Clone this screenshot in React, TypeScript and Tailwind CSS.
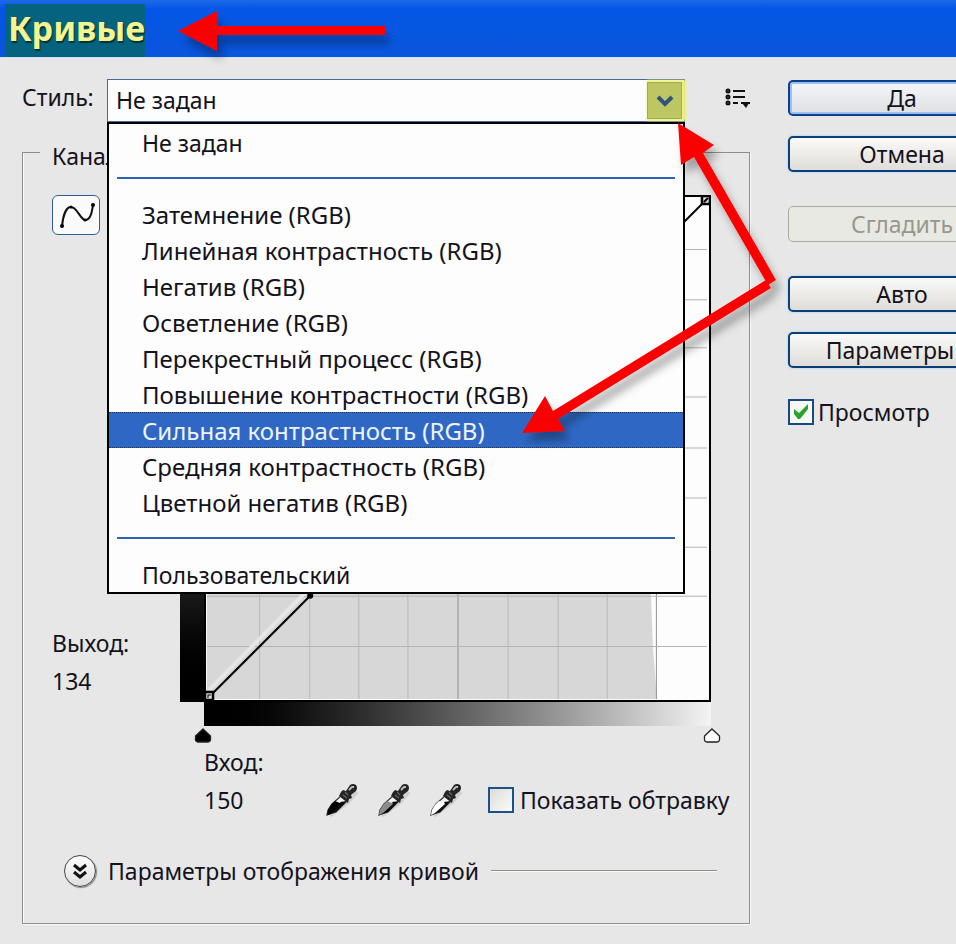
import { useState } from 'react';

const presets = [
  'Затемнение (RGB)',
  'Линейная контрастность (RGB)',
  'Негатив (RGB)',
  'Осветление (RGB)',
  'Перекрестный процесс (RGB)',
  'Повышение контрастности (RGB)',
  'Сильная контрастность (RGB)',
  'Средняя контрастность (RGB)',
  'Цветной негатив (RGB)',
];

const gridX = [55, 105, 154, 203, 253, 303, 353, 402, 451];
const gridY = [54, 104, 152, 201, 252, 302, 351, 400, 450];

const buttonBase =
  'h-9 w-[228px] rounded-[5px] border-2 text-center leading-8 whitespace-nowrap';
const buttonNormal =
  'border-[#0a4079] bg-linear-to-b from-[#fafaf9] to-[#dfddd8] shadow-[0_0_2px_1px_#c5dcef]';

function PresetOption({ name, selected }: { name: string; selected?: boolean }) {
  return (
    <li
      role="option"
      aria-selected={selected ? true : false}
      className={
        selected
          ? 'h-9 border-y border-dotted border-[#15386f] bg-[#2f68c4] pl-[33px] leading-9 text-[#eef4ff]'
          : 'h-9 pl-[33px] leading-[38px]'
      }
    >
      {name}
    </li>
  );
}

function PresetList() {
  return (
    <div
      role="listbox"
      aria-label="Стиль"
      className="absolute top-full left-0 z-10 w-full border-2 border-black bg-[#fdfdfd]"
    >
      <ul>
        <PresetOption name="Не задан" />
      </ul>
      <hr className="mx-2 my-[17px] border-t-2 border-[#2e62b8]" />
      <ul className="text-2xl">
        {presets.map((name) => (
          <PresetOption key={name} name={name} selected={name.startsWith('Сильная')} />
        ))}
      </ul>
      <hr className="mx-2 my-[17px] border-t-2 border-[#2e62b8]" />
      <ul>
        <PresetOption name="Пользовательский" />
      </ul>
    </div>
  );
}

function CurveGraph() {
  return (
    <svg viewBox="0 0 506 506" className="block w-full" aria-hidden="true">
      <rect width="506" height="506" fill="#fdfdfd" />
      <path d="M3 200H440L446 396L448 450L452 503H3Z" fill="#d6d7d6" />
      {gridX.map((x) => (
        <path key={x} d={`M${x}.5 3V503`} stroke={x === 253 || x === 451 ? '#8f9190' : '#b7b9b8'} />
      ))}
      {gridY.map((y) => (
        <path key={y} d={`M3 ${y}.5H502`} stroke="#b4b4b4" />
      ))}
      <path d="M5 494L102 396" stroke="#e6e6e6" strokeWidth="4" />
      <path d="M5 501L501 5" stroke="#000" strokeWidth="2" />
      <circle cx="106" cy="400" r="3" />
      <rect x="1" y="1" width="504" height="504" fill="none" stroke="#000" strokeWidth="2" />
      <rect x="1" y="496" width="8" height="8" fill="#ddd" stroke="#000" strokeWidth="2.5" />
      <path d="M4 502V499H7" fill="none" stroke="#000" />
      <rect x="497" y="1" width="8" height="8" fill="#ddd" stroke="#000" strokeWidth="2.5" />
      <path d="M499 7L503 3" stroke="#000" strokeWidth="2" />
    </svg>
  );
}

function RangeMarker({ fill }: { fill: string }) {
  return (
    <svg width="18" height="15" viewBox="0 0 18 15" aria-hidden="true">
      <path
        d="M9 1L16.500 8V12Q16 14 14 14H4Q2 14 1.500 12V8Z"
        fill={fill}
        stroke="#222"
        strokeWidth="1.300"
      />
    </svg>
  );
}

function Eyedropper({ label, fill }: { label: string; fill: string }) {
  return (
    <button type="button" aria-label={label} className="h-[34px] w-8 shrink-0">
      <svg width="32" height="34" viewBox="0 0 32 34" aria-hidden="true">
        <path d="M4 33L22 20L31 9" fill="none" stroke="#cfcfcf" strokeWidth="3" />
        <path
          d="M16 12L21 18L10 29L4 31L1 32L2 27L6 21Z"
          fill="#f3f3f3"
          stroke="#333"
          strokeWidth="1.200"
        />
        <path d="M9 18L14 20L17 20L9 28L4 31L1 32L2 27L5 22Z" fill={fill} />
        <path d="M1 32L10 29L21 18L14 19L15 21L5 30Z" fill="#0c0c0c" />
        <path
          d="M15 9L17 7L20 8L24 2Q27 0 30 2Q32 5 30 8L25 12L26 15L23 16L22 20L18 17L13 13Z"
          fill="#242424"
        />
        <path d="M23 7L26 4L28 4" fill="none" stroke="#bbb" strokeWidth="1.800" />
        <path d="M17 12L21 15M19 9L22 12" stroke="#666" strokeWidth="1.200" />
      </svg>
    </button>
  );
}

function PointerArrows() {
  return (
    <svg
      width="800"
      height="460"
      viewBox="0 0 800 460"
      className="pointer-events-none absolute top-0 left-0 z-20"
      aria-hidden="true"
    >
      <defs>
        <filter id="arrow-shadow" x="-10%" y="-30%" width="120%" height="180%">
          <feDropShadow dx="5" dy="9" stdDeviation="4" floodColor="#000" floodOpacity="0.3" />
        </filter>
      </defs>
      <g fill="#fb0505" filter="url(#arrow-shadow)">
        <path d="M178 31L217 11V26H385V35H217V51Z" />
        <path d="M678 123L714 145L703 153L776 280L768 285L694 157L681 165Z" />
        <path d="M522 433L545 396L553 411L766 280L771 288L558 419L565 431Z" />
      </g>
    </svg>
  );
}

export default function App() {
  const [preview, setPreview] = useState(true);
  const [clipping, setClipping] = useState(false);

  return (
    <div className="relative min-h-[944px] overflow-hidden bg-[#e7e7e7] font-['Noto_Sans','Open_Sans',sans-serif] text-[23px] text-[#14121c]">
      <header className="flex h-[58px] border-b border-[#cfe3f7] bg-linear-to-b from-[#1c6ae8] via-[#0456e6] via-15% to-[#0a55dc] pt-1 pl-[5px]">
        <h1 className="w-[140px] bg-[#06637f] pl-[3px] text-[34px] leading-[48px] font-bold text-[#f4f490] [text-shadow:1px_2px_1px_#033]">
          Кривые
        </h1>
      </header>

      <main className="flex gap-[38px] pt-[21px] pl-[22px]">
        <section className="min-w-0 flex-1">
          <div className="flex h-[43px]">
            <label htmlFor="style" className="w-[85px] leading-9">
              Стиль:
            </label>
            <div className="relative h-full flex-1">
              <select
                id="style"
                className="h-full w-full appearance-none border border-[#4a6a9a] bg-[#fdfdfd] pl-2"
              >
                <option>Не задан</option>
                {presets.map((name) => (
                  <option key={name}>{name}</option>
                ))}
                <option>Пользовательский</option>
              </select>
              <span className="pointer-events-none absolute inset-y-[3px] right-[3px] flex w-[35px] items-center justify-center border border-[#a3ad55] bg-[#bcc763] shadow-[2px_0_2px_2px_#eef07a]">
                <svg width="18" height="14" viewBox="0 0 18 14" aria-hidden="true">
                  <path d="M2 3L9 10L16 3" fill="none" stroke="#31527f" strokeWidth="4" />
                </svg>
              </span>
              <PresetList />
            </div>
            <button type="button" aria-label="Параметры стиля" className="ml-10 h-[37px]">
              <svg width="25" height="22" viewBox="0 0 25 22" aria-hidden="true">
                <path d="M8 4H20M8 10H20M8 16H13M16 16H25" stroke="#111" strokeWidth="2" />
                <path d="M17 16H24L21 21Z" fill="#111" />
                <g fill="#999" stroke="#111" strokeWidth="2">
                  <circle cx="3" cy="4" r="1.500" />
                  <circle cx="3" cy="10" r="1.500" />
                  <circle cx="3" cy="16" r="1.500" />
                </g>
              </svg>
            </button>
          </div>

          <fieldset className="mt-3.5 min-w-0 border border-[#8f8e8a] pr-8 pb-9 pl-[29px] shadow-[1px_1px_0_#fafafa,inset_1px_0_0_#fafafa]">
            <legend className="-ml-3 bg-[#e7e7e7] px-3 pt-2 leading-6">Канал:</legend>

            <div className="grid grid-cols-[128px_24px_minmax(0,1fr)] pt-[27px] pr-1.5">
              <div className="flex flex-col justify-between pb-0.5">
                <button
                  type="button"
                  aria-label="Кривая"
                  className="flex h-10 w-12 items-center justify-center rounded-md border border-[#2f5f92] bg-[#fafafa]"
                >
                  <svg width="38" height="28" viewBox="0 0 38 28" aria-hidden="true">
                    <path
                      d="M5 25C6 15 9 6 14 6C20 6 23 18 28 19C34 19 35 10 36 4"
                      fill="none"
                      stroke="#111"
                      strokeWidth="2"
                    />
                    <circle cx="5" cy="25" r="2" />
                    <circle cx="14" cy="6" r="1.500" />
                    <circle cx="28" cy="19" r="1.500" />
                    <circle cx="36" cy="4" r="2" />
                  </svg>
                </button>
                <div className="leading-[38px]">
                  <div>Выход:</div>
                  <output>134</output>
                </div>
              </div>
              <div className="bg-linear-to-t from-black to-white" />
              <CurveGraph />

              <div className="col-start-3">
                <div className="h-6 bg-linear-to-r from-black to-[#f4f4f4]" />
                <div className="-mx-2.5 mt-0.5 flex justify-between">
                  <RangeMarker fill="#000" />
                  <RangeMarker fill="#fff" />
                </div>
                <div className="leading-[38px] whitespace-nowrap">
                  <div>Вход:</div>
                  <div className="flex h-[38px] items-center">
                    <output className="w-[122px] shrink-0">150</output>
                    <div className="flex shrink-0 gap-5">
                      <Eyedropper label="Черная точка" fill="#000" />
                      <Eyedropper label="Серая точка" fill="#8c8c8c" />
                      <Eyedropper label="Белая точка" fill="#fff" />
                    </div>
                    <label className="ml-[26px] flex shrink-0 items-center gap-1.5">
                      <input
                        type="checkbox"
                        checked={clipping}
                        onChange={(e) => setClipping(e.target.checked)}
                        className="size-[26px] shrink-0 appearance-none border-2 border-[#1b5288] bg-linear-to-br from-[#dcdcd8] to-[#fbfbfb]"
                      />
                      Показать обтравку
                    </label>
                  </div>
                </div>
              </div>
            </div>

            <div className="mt-9 ml-3 flex items-center gap-3">
              <button
                type="button"
                aria-label="Развернуть"
                className="flex size-8 shrink-0 items-center justify-center rounded-full border border-[#444] bg-linear-to-b from-white to-[#dedede] shadow-[1px_1px_1px_#888]"
              >
                <svg width="16" height="18" viewBox="0 0 16 18" aria-hidden="true">
                  <path
                    d="M2 3L8 8L14 3M2 10L8 15L14 10"
                    fill="none"
                    stroke="#111"
                    strokeWidth="3"
                  />
                </svg>
              </button>
              <span className="leading-8 whitespace-nowrap">Параметры отображения кривой</span>
              <span className="h-0.5 flex-1 border-t border-[#8f8e7c] bg-[#fafafa]" />
            </div>
          </fieldset>
        </section>

        <aside className="flex w-[168px] flex-col gap-[34px] pt-px">
          <div className="flex flex-col gap-5">
            <button
              type="button"
              className={`${buttonBase} border-[#0a3f8c] bg-linear-to-b from-[#f4f6fa] to-[#dfe0e2] shadow-[inset_0_0_0_2px_#9dc0f2]`}
            >
              Да
            </button>
            <button type="button" className={`${buttonBase} ${buttonNormal}`}>
              Отмена
            </button>
          </div>
          <button
            type="button"
            disabled
            className="h-9 w-[228px] rounded-[5px] border border-[#aaa99f] bg-[#e9e9e4] text-center leading-8 text-[#98978d]"
          >
            Сгладить
          </button>
          <div className="flex flex-col gap-5">
            <button type="button" className={`${buttonBase} ${buttonNormal}`}>
              Авто
            </button>
            <button type="button" className={`${buttonBase} ${buttonNormal} pr-6`}>
              Параметры
            </button>
            <div className="mt-2.5 flex items-center gap-1">
              <span className="relative size-[26px] shrink-0">
                <input
                  id="preview"
                  type="checkbox"
                  checked={preview}
                  onChange={(e) => setPreview(e.target.checked)}
                  className="block size-[26px] appearance-none border-2 border-[#174a80] bg-[#f8f8f6]"
                />
                {preview && (
                  <svg
                    viewBox="0 0 26 26"
                    className="pointer-events-none absolute inset-0"
                    aria-hidden="true"
                  >
                    <path d="M6 10L11 14L20 5V10L12 20L10 20L6 15Z" fill="#27a42b" />
                  </svg>
                )}
              </span>
              <label htmlFor="preview" className="leading-7">
                Просмотр
              </label>
            </div>
          </div>
        </aside>
      </main>

      <PointerArrows />
    </div>
  );
}
